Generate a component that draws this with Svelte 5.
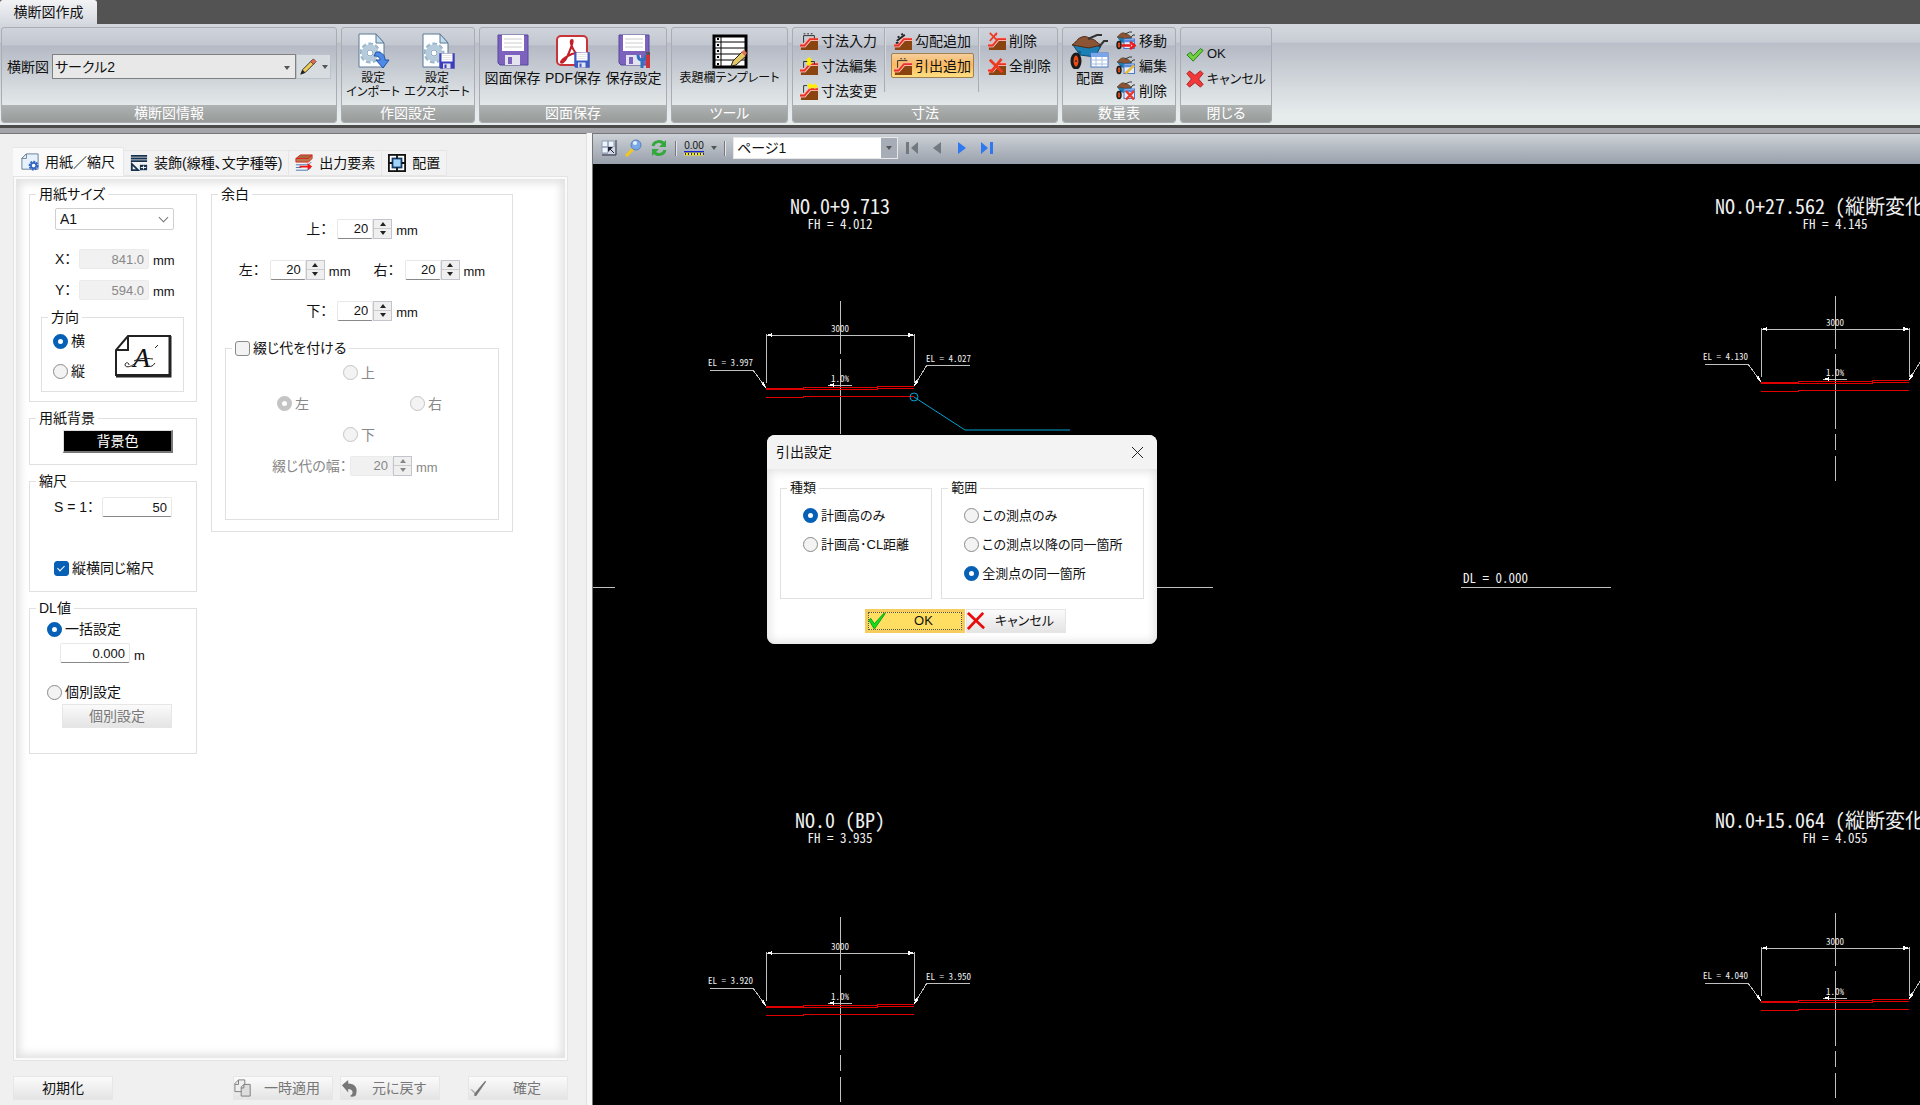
<svelte:head>
	<title>横断図作成</title>
</svelte:head>

<script>
	let section = 'サークル2';
	let page = 'ページ1';
	let paper = 'A1';
	let paperX = '841.0';
	let paperY = '594.0';
	let direction = 'yoko';
	let scale = '50';
	let sameScale = true;
	let dlMode = 'all';
	let dlValue = '0.000';
	let margins = { top: 20, left: 20, right: 20, bottom: 20 };
	let binding = false;
	let bindingSide = 'left';
	let bindingWidth = 20;
	let kind = 'height';
	let range = 'all';
	let dialogOpen = true;

	const tabs = [
		{ icon: 'paper', label: '用紙／縮尺' },
		{ icon: 'deco', label: '装飾(線種、文字種等)' },
		{ icon: 'output', label: '出力要素' },
		{ icon: 'layout', label: '配置' }
	];
	let activeTab = 0;

	// cx: centre line, dim: height of the dimension line
	const sections = [
		{ cx: 247, title: 'NO.0+9.713', fh: '4.012', titleY: 50, top: 137, dim: 171, left: '3.997', right: '4.027' },
		{ cx: 1242, title: 'NO.0+27.562 (縦断変化点)', fh: '4.145', titleY: 50, top: 132, dim: 165, left: '4.130', right: '4.160' },
		{ cx: 247, title: 'NO.0 (BP)', fh: '3.935', titleY: 664, top: 753, dim: 789, left: '3.920', right: '3.950' },
		{ cx: 1242, title: 'NO.0+15.064 (縦断変化点)', fh: '4.055', titleY: 664, top: 749, dim: 784, left: '4.040', right: '4.070' }
	];

	function step(side, diff) {
		margins[side] = Number(margins[side]) + diff;
	}
</script>

{#snippet floppy(color)}
	<path d="M1 1h30v30H3l-2-2z" fill={color} stroke="#54489a" />
	<rect x="5" y="1" width="22" height="16" fill="#fff" />
	<path d="M7 5h18M7 9h18M7 13h18" stroke="#ccc" />
	<rect x="8" y="21" width="15" height="10" fill="#e4e4ee" />
	<rect x="11" y="23" width="4" height="7" fill={color} />
{/snippet}

{#snippet gearPage()}
	<path d="M4 1h17l8 9v24H4z" fill="#fdfeff" stroke="#5a7894" />
	<path d="M21 1v9h8z" fill="#c5dced" stroke="#5a7894" />
	<circle cx="15" cy="20" r="8" fill="none" stroke="#9db8cc" stroke-width="5" stroke-dasharray="4 2" />
	<circle cx="15" cy="20" r="6" fill="#e9f1f7" stroke="#b5cbdc" stroke-width="5" />
	<circle cx="15" cy="20" r="3" fill="#fff" stroke="#8aa6bc" />
{/snippet}

{#snippet slope()}
	<path d="M1 17h5l6-7h8v10H1z" fill="#8a4410" />
	<path d="M0 15h5l6-7h9" fill="none" stroke="#ffb3a8" stroke-width="4" />
	<path d="M0 15h5l6-7h9" fill="none" stroke="#e83228" stroke-width="2" />
{/snippet}

{#snippet barrow()}
	<path d="M3 12l7 10 15 2 6-11" fill="#1b7fb4" stroke="#0b4a70" />
	<path d="M2 12c4-2 5-7 10-8 5-2 7 2 10 2 4 1 5 4 9 6l-12 3z" fill="#8a5435" stroke="#4d2a17" />
	<path d="M18 6L27 2l5 0M29 14l5-6h4" fill="none" stroke="#333" stroke-width="2" />
	<path d="M10 18L6 28" stroke="#0b5d8f" stroke-width="3" />
	<ellipse cx="6" cy="28" rx="4" ry="7" fill="#ef4a16" stroke="#1c1c1c" stroke-width="3" />
	<circle cx="6" cy="28" r="1" fill="#333" />
{/snippet}

{#snippet icon(name)}
	{#if name === 'import' || name === 'export'}
		<svg class="big" viewBox="0 0 36 36">
			{@render gearPage()}
			{#if name === 'import'}
				<path d="M21 19c6 0 9 3 9 8h4l-6 8-7-8h4c0-3-2-4-6-4z" fill="#4e8ae6" stroke="#2253a8" />
			{:else}
				<g transform="translate(20 20) scale(.5)">{@render floppy('#3a3fc0')}</g>
			{/if}
		</svg>
	{:else if name === 'save'}
		<svg class="big" viewBox="0 0 36 36"><g transform="translate(2 1)">{@render floppy('#7d62bd')}</g></svg>
	{:else if name === 'pdf'}
		<svg class="big" viewBox="0 0 36 36">
			<rect x="2" y="3" width="30" height="29" rx="4" fill="#fff" stroke="#c9343a" stroke-width="2" />
			<path d="M17 7c-3 0 0 8 3 12s8 5 8 3-6-3-11-1-11 6-11 8 4 0 7-7 6-15 4-15z" fill="none" stroke="#c41f28" stroke-width="2" />
			<g transform="translate(19 19) scale(.5)">{@render floppy('#3a5cc8')}</g>
		</svg>
	{:else if name === 'saveset'}
		<svg class="big" viewBox="0 0 36 36">
			<g transform="translate(2 1)">{@render floppy('#7d62bd')}</g>
			<path d="M22 22c0 4 2 5 4 5s4-1 4-5M26 27v8" fill="none" stroke="#2e6fc0" stroke-width="3" />
			<path d="M29 19h5v3h-3z" fill="#555" />
			<path d="M32 22v13" stroke="#c8343a" stroke-width="4" />
		</svg>
	{:else if name === 'template'}
		<svg class="big" viewBox="0 0 36 36">
			<rect x="2" y="3" width="32" height="31" fill="#fff" stroke="#000" stroke-width="3" />
			<path d="M2 9h32M2 15h32M2 21h32M2 27h32M9 3v31" stroke="#000" />
			<path d="M5 6h2M5 12h2M5 18h2M5 24h2M5 31h2" stroke="#000" stroke-width="2" />
			<path d="M19 33l2-5 9-9 4 4-10 9z" fill="#e6c766" stroke="#222" />
			<path d="M29 19l3-2 3 3-2 3z" fill="#d9705a" />
		</svg>
	{:else if name === 'barrow'}
		<svg class="barrow" viewBox="0 0 40 36">
			{@render barrow()}
			<rect x="21" y="20" width="17" height="14" fill="#fff" stroke="#4b78c8" />
			<rect x="21" y="20" width="17" height="4" fill="#7aa5ea" />
			<path d="M21 27h17M21 31h17M26 24v10M32 24v10" stroke="#a9bfdf" />
		</svg>
	{:else if name.startsWith('barrow-')}
		<svg class="mid" viewBox="0 0 40 40">
			{@render barrow()}
			<rect x="16" y="16" width="21" height="19" fill="#e6eefc" stroke="#4b78c8" stroke-width="2" />
			<path d="M16 20h21" stroke="#5a8be0" stroke-width="5" />
			{#if name === 'barrow-move'}
				<path d="M11 29h19M28 22l9 7-9 7" fill="none" stroke="#e81c1c" stroke-width="5" />
			{:else if name === 'barrow-edit'}
				<path d="M19 35l17-16" stroke="#e6b93b" stroke-width="5" />
			{:else}
				<path d="M20 20l16 17M36 20L20 37" stroke="#e83a2c" stroke-width="5" />
			{/if}
		</svg>
	{:else if name.startsWith('dim')}
		<svg class="small" viewBox="0 0 20 20">
			{@render slope()}
			{#if name === 'dim-in'}
				<path d="M4 12V4h12v3M4 2h2M8 2h2M12 2h2" fill="none" stroke="#222" />
			{:else if name === 'dim-edit'}
				<path d="M4 12V5h12v3" fill="none" stroke="#222" />
				<path d="M10 0l4 4h-2v3h2l-4 3-4-3h2V4H6z" fill="#ffee00" />
			{:else if name === 'dim-change'}
				<path d="M4 12V4h4" fill="none" stroke="#222" />
				<path d="M8 4l3-3 2 2h3V1l4 4-4 3V6h-3l-2 2z" fill="#ffee00" />
			{:else if name === 'dim-slope'}
				<path d="M3 10L12 3M4 5l2 1M8 3l2-1M2 12h3" fill="none" stroke="#222" stroke-width="2" />
			{:else if name === 'dim-lead'}
				<path d="M4 12V4h11M7 2h2M11 2h2" fill="none" stroke="#222" />
			{:else if name === 'dim-del'}
				<path d="M2 1l8 8M10 1L2 10M7 3h3" stroke="#ef3a22" stroke-width="2" />
			{:else}
				<path d="M2 3l14 14M15 2L3 17" stroke="#ef3a22" stroke-width="3" />
			{/if}
		</svg>
	{:else if name === 'ok'}
		<svg class="small" viewBox="0 0 20 20"><path d="M1 11l4-3 3 4 8-8 3 2-11 12z" fill="#6fd03a" stroke="#227a18" /></svg>
	{:else if name === 'cancel'}
		<svg class="small" viewBox="0 0 20 20"><path d="M1 4l3-3 6 5 6-5 3 3-5 6 5 6-3 3-6-5-6 5-3-3 5-6z" fill="#f23838" stroke="#a81818" /></svg>
	{:else if name === 'pencil'}
		<svg class="small" viewBox="0 0 20 20">
			<path d="M2 18l2-5L14 3l3 3L7 16z" fill="#f0cf58" stroke="#222" />
			<path d="M2 18l2-5 3 3z" fill="#222" />
			<path d="M13 4l3-3 3 3-3 3z" fill="#d9705a" stroke="#7a3c30" />
		</svg>
	{:else if name === 'paper'}
		<svg class="small" viewBox="0 0 20 20">
			<path d="M6 1h13v17H1V6z" fill="#e6f1fb" stroke="#61788f" />
			<path d="M6 1v5H1z" fill="#fff" stroke="#61788f" />
			<circle cx="14" cy="14" r="4" fill="#fff" stroke="#3467c6" stroke-width="3" stroke-dasharray="2 1" />
			<circle cx="14" cy="14" r="3" fill="none" stroke="#3467c6" stroke-width="2" />
		</svg>
	{:else if name === 'deco'}
		<svg class="small" viewBox="0 0 20 20">
			<path d="M1 2h18M1 5h18M1 8h18" stroke="#17324e" stroke-width="2" />
			<path d="M2 11v7h7z" fill="none" stroke="#17324e" stroke-width="2" />
			<rect x="11" y="12" width="8" height="6" fill="#17324e" />
			<path d="M12 15h6M15 13v4" stroke="#fff" />
		</svg>
	{:else if name === 'output'}
		<svg class="small" viewBox="0 0 20 20">
			<path d="M6 1h13l-4 4H1z" fill="#a8673f" stroke="#d8251c" />
			<path d="M1 5h14l4-4v4l-4 4H1z" fill="#b87850" stroke="#d8251c" />
			<path d="M1 12h14l3-3M1 15h6M1 18h13l4-3" fill="none" stroke="#3c6fb0" />
			<path d="M5 13h9v-3l5 4-5 4v-3H5z" fill="#f31414" />
		</svg>
	{:else if name === 'layout'}
		<svg class="small" viewBox="0 0 20 20">
			<rect x="1" y="1" width="18" height="18" fill="#fff" stroke="#111" stroke-width="2" />
			<rect x="5" y="5" width="10" height="10" fill="#9fd3fa" stroke="#123b66" stroke-width="2" />
			<path d="M10 1v4M10 15v4M1 10h4M15 10h4" stroke="#111" stroke-width="2" />
		</svg>
	{:else if name === 'apply'}
		<svg class="small" viewBox="0 0 20 20">
			<path d="M5 1h7v13H1V5zM5 1v5H1" fill="#eee" stroke="#777" />
			<path d="M11 6h7v13H8V9zM11 6v4H8" fill="#ddd" stroke="#777" />
		</svg>
	{:else if name === 'undo'}
		<svg class="small" viewBox="0 0 20 20"><path d="M1 7l7-6v4c7 0 12 5 8 14-3 1-5 1-6 0 5-3 3-8-2-8v4z" fill="#777" /></svg>
	{:else if name === 'commit'}
		<svg class="small" viewBox="0 0 20 20">
			<path d="M6 16L18 2l1 1L8 19H6z" fill="#777" />
			<path d="M1 11l2 2 3 3 1-1-3-3z" fill="#aaa" />
		</svg>
	{:else if name === 'check'}
		<svg class="small" viewBox="0 0 20 20"><path d="M1 9l2-2 4 6L18 1l1 1L7 19z" fill="#10e020" stroke="#0a9a14" /></svg>
	{:else if name === 'cross'}
		<svg class="small" viewBox="0 0 20 20"><path d="M1 1l18 17M18 1L1 19" stroke="#e80c0c" stroke-width="3" /></svg>
	{/if}
{/snippet}

{#snippet big(name, lines, kana)}
	<button class="big-btn" class:kana>
		{@render icon(name)}
		{#each lines as line}<span>{line}</span>{/each}
	</button>
{/snippet}

{#snippet small(name, label, on)}
	<button class="small-btn" class:on>{@render icon(name)}<span>{label}</span></button>
{/snippet}

{#snippet spin(id, label, side)}
	<div class="field">
		<label for={id}>{label}：</label>
		<span class="spin">
			<input {id} type="text" bind:value={margins[side]} />
			<span class="arrows">
				<button aria-label="増やす" on:click={() => step(side, 1)}></button>
				<button class="down" aria-label="減らす" on:click={() => step(side, -1)}></button>
			</span>
		</span>
		<span class="unit">mm</span>
	</div>
{/snippet}

<div class="app">
	<header>
		<div class="title"><button class="title-tab">横断図作成</button></div>
		<div class="ribbon">
			<section class="group">
				<div class="items">
					<label for="section">横断図</label>
					<span class="combo section-combo">
						<select id="section" bind:value={section}><option>サークル2</option></select>
					</span>
					<button class="pencil" aria-label="編集">{@render icon('pencil')}<i class="caret"></i></button>
				</div>
				<h2>横断図情報</h2>
			</section>
			<section class="group">
				<div class="items wide">
					{@render big('import', ['設定', 'インポート'], true)}
					{@render big('export', ['設定', 'エクスポート'], true)}
				</div>
				<h2>作図設定</h2>
			</section>
			<section class="group">
				<div class="items wide">
					{@render big('save', ['図面保存'])}
					{@render big('pdf', ['PDF保存'])}
					{@render big('saveset', ['保存設定'])}
				</div>
				<h2>図面保存</h2>
			</section>
			<section class="group">
				<div class="items wide">{@render big('template', ['表題欄テンプレート'], true)}</div>
				<h2>ツール</h2>
			</section>
			<section class="group">
				<div class="items cols">
					<div class="col">
						{@render small('dim-in', '寸法入力')}
						{@render small('dim-edit', '寸法編集')}
						{@render small('dim-change', '寸法変更')}
					</div>
					<div class="col">
						{@render small('dim-slope', '勾配追加')}
						{@render small('dim-lead', '引出追加', true)}
					</div>
					<div class="col">
						{@render small('dim-del', '削除')}
						{@render small('dim-delall', '全削除')}
					</div>
				</div>
				<h2>寸法</h2>
			</section>
			<section class="group">
				<div class="items cols">
					{@render big('barrow', ['配置'])}
					<div class="col">
						{@render small('barrow-move', '移動')}
						{@render small('barrow-edit', '編集')}
						{@render small('barrow-del', '削除')}
					</div>
				</div>
				<h2>数量表</h2>
			</section>
			<section class="group">
				<div class="items close">
					{@render small('ok', 'OK')}
					{@render small('cancel', 'キャンセル')}
				</div>
				<h2>閉じる</h2>
			</section>
		</div>
	</header>

	<main>
		<aside>
			<nav>
				{#each tabs as tab, i}
					<button class="tab" class:active={activeTab === i} on:click={() => (activeTab = i)}>
						{@render icon(tab.icon)}<span>{tab.label}</span>
					</button>
				{/each}
			</nav>
			<div class="sheet">
				<div class="left-col">
					<fieldset class="size">
						<legend>用紙サイズ</legend>
						<span class="combo paper-combo">
							<select aria-label="用紙サイズ" bind:value={paper}><option>A1</option><option>A2</option><option>A3</option></select>
						</span>
						<div class="xy">
							<label for="px">X：</label><input id="px" type="text" bind:value={paperX} disabled /><span class="unit">mm</span>
						</div>
						<div class="xy">
							<label for="py">Y：</label><input id="py" type="text" bind:value={paperY} disabled /><span class="unit">mm</span>
						</div>
						<fieldset class="direction">
							<legend>方向</legend>
							<div>
								<label class="opt"><input type="radio" bind:group={direction} value="yoko" />横</label>
								<label class="opt"><input type="radio" bind:group={direction} value="tate" />縦</label>
							</div>
							<svg width="58" height="44" viewBox="0 0 58 44">
								<path d="M14 2h42v39H2V16z" fill="#fff" stroke="#222" stroke-width="2" />
								<path d="M2 42h54V2" fill="none" stroke="#222" stroke-width="3" />
								<path d="M14 2v14H2" fill="none" stroke="#222" stroke-width="2" />
								<text x="19" y="33" class="script">A</text>
								<path d="M24 26c-4 6-12 9-13 5 0-3 4-3 4 0M20 27c6-3 12-3 19-2M41 14l3-3M35 32c2 1 4 0 6-3" fill="none" stroke="#222" />
							</svg>
						</fieldset>
					</fieldset>
					<fieldset class="bg">
						<legend>用紙背景</legend>
						<button class="black">背景色</button>
					</fieldset>
					<fieldset class="scale">
						<legend>縮尺</legend>
						<div class="xy">
							<label for="scale">S = 1：</label><input id="scale" type="text" bind:value={scale} />
						</div>
						<label class="opt"><input type="checkbox" bind:checked={sameScale} />縦横同じ縮尺</label>
					</fieldset>
					<fieldset class="dl">
						<legend>DL値</legend>
						<label class="opt"><input type="radio" bind:group={dlMode} value="all" />一括設定</label>
						<div class="dl-value"><input type="text" aria-label="DL値" bind:value={dlValue} /><span class="unit">m</span></div>
						<label class="opt"><input type="radio" bind:group={dlMode} value="each" />個別設定</label>
						<button class="plain" disabled={dlMode === 'all'}>個別設定</button>
					</fieldset>
				</div>

				<fieldset class="margins">
					<legend>余白</legend>
					<div class="mrow">{@render spin('mt', '上', 'top')}</div>
					<div class="mrow">{@render spin('ml', '左', 'left')}{@render spin('mr', '右', 'right')}</div>
					<div class="mrow">{@render spin('mb', '下', 'bottom')}</div>
					<fieldset class="binding">
						<legend><label class="opt"><input type="checkbox" bind:checked={binding} />綴じ代を付ける</label></legend>
						<div class="sides">
							<label class="opt top"><input type="radio" bind:group={bindingSide} value="top" disabled={!binding} />上</label>
							<label class="opt left"><input type="radio" bind:group={bindingSide} value="left" disabled={!binding} />左</label>
							<label class="opt right"><input type="radio" bind:group={bindingSide} value="right" disabled={!binding} />右</label>
							<label class="opt bottom"><input type="radio" bind:group={bindingSide} value="bottom" disabled={!binding} />下</label>
						</div>
						<div class="field bind-width">
							<label for="bw">綴じ代の幅：</label>
							<span class="spin">
								<input id="bw" type="text" bind:value={bindingWidth} disabled={!binding} />
								<span class="arrows">
									<button aria-label="増やす" disabled={!binding}></button>
									<button class="down" aria-label="減らす" disabled={!binding}></button>
								</span>
							</span>
							<span class="unit">mm</span>
						</div>
					</fieldset>
				</fieldset>
			</div>
			<footer>
				<button class="plain reset">初期化</button>
				<button class="plain" disabled>{@render icon('apply')}<span>一時適用</span></button>
				<button class="plain" disabled>{@render icon('undo')}<span>元に戻す</span></button>
				<button class="plain commit" disabled>{@render icon('commit')}<span>確定</span></button>
			</footer>
		</aside>

		<div class="view">
			<div class="toolbar">
				<button aria-label="全体表示">
					<svg width="18" height="18" viewBox="0 0 18 18">
						<path d="M2 2h6v6H2zM8 2h6v6H8zM2 8h6v6H2z" fill="#eef4fb" stroke="#8a9bb0" />
						<path d="M8 8h7v7H8z" fill="#cfd8e4" />
						<path d="M16 1v15H2" fill="none" stroke="#334" />
						<path d="M14 14l-4-4" stroke="#223" />
						<path d="M8 8h5l-5 5z" fill="#223" />
					</svg>
				</button>
				<button aria-label="拡大">
					<svg width="18" height="18" viewBox="0 0 18 18">
						<path d="M1 17l7-7" stroke="#f2c81c" stroke-width="3" />
						<circle cx="11" cy="6" r="5" fill="#79a9e6" stroke="#5c7fb5" />
						<circle cx="10" cy="4" r="2" fill="#e5f1ff" />
					</svg>
				</button>
				<button aria-label="再表示">
					<svg width="18" height="18" viewBox="0 0 18 18">
						<path d="M3 7c1-5 8-6 11-2M15 11c-1 5-8 6-11 2" fill="none" stroke="#35a83c" stroke-width="3" />
						<path d="M16 1v7h-7zM2 17v-7h7z" fill="#35a83c" />
					</svg>
				</button>
				<i class="sep"></i>
				<button class="digits" aria-label="寸法表示">
					<span>0.00</span>
					<svg width="20" height="5" viewBox="0 0 20 5"><path d="M0 1h20" stroke="#1620d8" stroke-width="2" /><path d="M0 3h20" stroke="#f4ea10" stroke-width="3" /><path d="M1 3h19" stroke="#1620d8" stroke-width="2" stroke-dasharray="1 2" /></svg>
				</button>
				<i class="caret"></i>
				<i class="sep"></i>
				<span class="combo page-combo">
					<select aria-label="ページ" bind:value={page}><option>ページ1</option></select>
				</span>
				<button class="nav" aria-label="最初" disabled><svg width="14" height="14" viewBox="0 0 14 14"><path d="M1 1h3v12H1zM13 1v12L6 7z" fill="#747980" /></svg></button>
				<button class="nav" aria-label="前へ" disabled><svg width="14" height="14" viewBox="0 0 14 14"><path d="M11 1v12L3 7z" fill="#747980" /></svg></button>
				<button class="nav" aria-label="次へ"><svg width="14" height="14" viewBox="0 0 14 14"><path d="M3 1v12l8-6z" fill="#2f78f0" /></svg></button>
				<button class="nav" aria-label="最後"><svg width="14" height="14" viewBox="0 0 14 14"><path d="M1 1v12l7-6zM10 1h3v12h-3z" fill="#2f78f0" /></svg></button>
			</div>

			<div class="canvas">
				<svg class="drawing">
					{#each sections as s}
						<g transform="translate({s.cx} 0)">
							<text class="name" y={s.titleY}>{s.title}</text>
							<text class="fh" y={s.titleY + 15}>FH = {s.fh}</text>
							<path class="axis" d="M0 {s.top}v53m0 5v75m0 5v16m0 6v25" />
							<g transform="translate(0 {s.dim})">
								<path class="line" d="M-74 -1v49M74 -1v49M-74 0H74M-130 35h43l13 18M130 30H87L74 51M-12 50h24" />
								<path class="tip" d="M-74 0l6-2v4zM74 0l-6-2v4zM-74 53l-5-4 3-2zM74 51l2-6 2 2zM-12 50l6-2v4z" />
								<path class="red" d="M-74 53h37v-1h74v-1h37M-74 54h37h74v-1h37M-74 62h37v-1h111" />
								<text class="dim" y="-3">3000</text>
								<text class="dim" y="47">1.0%</text>
								<text class="el" x="-132" y="31">EL = {s.left}</text>
								<text class="el" x="86" y="27">EL = {s.right}</text>
							</g>
						</g>
					{/each}
					<path class="line" d="M0 423h22M470 423h150M868 423h150" />
					<text class="fh dl-text" x="870" y="419">DL = 0.000</text>
					<g class="leader">
						<circle cx="321" cy="233" r="4" />
						<path d="M321 233l51 33h105" />
					</g>
				</svg>

				{#if dialogOpen}
					<div class="dialog" role="dialog" aria-label="引出設定">
						<div class="dialog-title">
							<span>引出設定</span>
							<button aria-label="閉じる" on:click={() => (dialogOpen = false)}>
								<svg width="13" height="13" viewBox="0 0 13 13"><path d="M1 1l11 11M12 1L1 12" stroke="#222" /></svg>
							</button>
						</div>
						<div class="dialog-body">
							<div class="dialog-sets">
								<fieldset>
									<legend>種類</legend>
									<label class="opt"><input type="radio" bind:group={kind} value="height" />計画高のみ</label>
									<label class="opt"><input type="radio" bind:group={kind} value="cl" />計画高･CL距離</label>
								</fieldset>
								<fieldset>
									<legend>範囲</legend>
									<label class="opt"><input type="radio" bind:group={range} value="this" />この測点のみ</label>
									<label class="opt"><input type="radio" bind:group={range} value="after" />この測点以降の同一箇所</label>
									<label class="opt"><input type="radio" bind:group={range} value="all" />全測点の同一箇所</label>
								</fieldset>
							</div>
							<div class="dialog-btns">
								<button class="plain ok" on:click={() => (dialogOpen = false)}>{@render icon('check')}<span>OK</span></button>
								<button class="plain" on:click={() => (dialogOpen = false)}>{@render icon('cross')}<span>キャンセル</span></button>
							</div>
						</div>
					</div>
				{/if}
			</div>
		</div>
	</main>
</div>

<style>
:global(body) {
	margin: 0;
	background: #f0f0f0;
}

.app {
	height: 100vh;
	display: flex;
	flex-direction: column;
	overflow: hidden;
	font-family: "Liberation Sans", "Noto Sans CJK JP", sans-serif;
	font-size: 14px;
	line-height: 18px;
	font-feature-settings: "palt";
	color: #111;
	white-space: nowrap;
}

.app *, .app *::after {
	box-sizing: border-box;
}

button, input, select {
	font: inherit;
	font-feature-settings: inherit;
	color: inherit;
	margin: 0;
	padding: 0;
	border: 0;
	background: none;
	border-radius: 0;
}

svg {
	display: block;
	flex: none;
}

svg.big {
	width: 36px;
	height: 36px;
}

svg.barrow {
	width: 40px;
	height: 36px;
}

svg.small {
	width: 18px;
	height: 18px;
}

svg.mid {
	width: 20px;
	height: 20px;
}

/* ribbon */
.title {
	height: 24px;
	background: #535353;
}

.title-tab {
	width: 97px;
	height: 24px;
	border-radius: 3px 3px 0 0;
	background: linear-gradient(#f2f3f5, #d5d9e0);
}

.ribbon {
	display: grid;
	grid-template-columns: 336px 134px 188px 117px 266px 114px 92px;
	gap: 4px;
	padding: 3px 1px 2px;
	background: linear-gradient(#d4d8de, #c8ccd4 18%, #b9bec8 19%, #e6ecec 90%);
	border-bottom: 3px solid #4b4b4b;
}

.group {
	height: 96px;
	display: flex;
	flex-direction: column;
	border: 1px solid #a9adb3;
	border-radius: 3px;
	overflow: hidden;
	background: linear-gradient(#cfd3db, #c3c7d0 18%, #b4b9c5 19%, #e3e9e9 82%);
}

.group h2 {
	margin: 0;
	height: 17px;
	font-size: 14px;
	line-height: 16px;
	font-weight: 400;
	text-align: center;
	color: #fff;
	background: linear-gradient(#b0b3b3, #969a98);
}

.items {
	flex: 1;
	display: flex;
	align-items: center;
	padding: 0 5px;
}

.items.wide {
	justify-content: space-evenly;
	align-items: flex-start;
	padding: 0;
}

.items.cols {
	align-items: flex-start;
	padding: 0 4px;
}

.items.close {
	flex-direction: column;
	align-items: flex-start;
	justify-content: center;
	padding: 0 2px;
	font-size: 13px;
}

.items > label {
	width: 45px;
}

.combo {
	position: relative;
	display: flex;
}

.combo select {
	width: 100%;
	appearance: none;
	padding-left: 2px;
}

.combo::after, .caret {
	content: "";
	border: 3px solid transparent;
	border-top: 4px solid #555;
	border-bottom: 0;
}

.combo::after {
	position: absolute;
	right: 5px;
	top: 11px;
	pointer-events: none;
}

.section-combo {
	flex: 1;
	height: 25px;
	background: #e8e8e8;
	border: 1px solid #808080;
}

.pencil {
	width: 35px;
	height: 25px;
	display: flex;
	align-items: center;
	justify-content: space-around;
	border: 1px solid #b9c3c8;
	background: #d7dce0;
}

.big-btn {
	display: flex;
	flex-direction: column;
	align-items: center;
	line-height: 14px;
	padding-top: 5px;
}

.big-btn.kana {
	font-size: 12px;
}

.cols .big-btn {
	padding-left: 3px;
}

.big-btn svg {
	margin-bottom: 2px;
}

.col {
	padding-right: 5px;
}

.col + .col {
	padding-left: 5px;
	border-left: 1px solid #d5d8dc;
	box-shadow: -1px 0 #a8adb3;
	min-height: 64px;
}

.big-btn + .col {
	padding: 0 0 0 3px;
}

.small-btn {
	height: 25px;
	display: flex;
	align-items: center;
	gap: 3px;
	padding: 0 2px;
	border: 1px solid transparent;
}

.small-btn.on {
	border-color: #a08050;
	border-radius: 2px;
	background: linear-gradient(#f5cf9c, #f9b862 45%, #ffdf80);
}

/* settings */
main {
	flex: 1;
	min-height: 0;
	display: grid;
	grid-template-columns: 587px 1fr;
	gap: 5px;
	border-top: 5px solid #a4a5ab;
	background: #f8f8f8;
}

aside {
	display: flex;
	flex-direction: column;
	min-height: 0;
	padding: 13px 18px 5px 13px;
	background: #f0f0f0;
	border-top: 1px solid #777;
	border-right: 1px solid #e2e2e2;
}

nav {
	display: flex;
	align-items: flex-end;
}

.tab {
	height: 26px;
	display: flex;
	align-items: center;
	gap: 6px;
	padding: 0 6px;
	border: 1px solid #e6e6e6;
	border-left: 0;
	background: #f2f2f2;
}

.tab.active {
	height: 29px;
	padding: 0 8px;
	border-bottom-color: #fafafa;
	background: #fafafa;
}

.sheet {
	flex: 1;
	min-height: 0;
	display: flex;
	align-items: flex-start;
	gap: 14px;
	padding: 6px 13px;
	border: 3px solid #fafafa;
	outline: 1px solid #e4e4e4;
	outline-offset: -1px;
	background: #fff;
	box-shadow: inset 0 0 9px 4px #e2e2e2;
}

fieldset {
	min-width: 0;
	margin: 0;
	padding: 0;
	border: 1px solid #e0e0e0;
}

legend {
	margin-left: 6px;
	padding: 0 3px;
}

.left-col {
	width: 168px;
	display: flex;
	flex-direction: column;
	gap: 7px;
}

.size {
	height: 217px;
	padding: 5px 12px 0 11px;
}

.size > legend {
	margin-left: -5px;
}

.paper-combo {
	width: 119px;
	height: 22px;
	margin: 0 0 19px 14px;
	border: 1px solid #cfcfcf;
	border-radius: 2px;
}

.paper-combo select {
	padding-left: 4px;
}

.paper-combo::after {
	width: 7px;
	height: 7px;
	right: 6px;
	top: 5px;
	border: solid #777;
	border-width: 0 1px 1px 0;
	transform: rotate(45deg);
}

.xy {
	display: flex;
	height: 20px;
	align-items: center;
	margin: 0 0 11px 14px;
}

.xy label {
	width: 24px;
}

input[type="text"] {
	width: 70px;
	height: 20px;
	padding: 0 4px;
	text-align: right;
	border: 1px solid #e8e8e8;
	border-bottom-color: #888;
	border-radius: 2px;
	background: #fff;
	font-size: 13px;
}

input[type="text"]:disabled {
	border-color: #ebebeb;
	background: #f1f1f1;
	color: #888;
}

.unit {
	margin-left: 4px;
	padding-top: 4px;
	font-size: 13px;
}

.direction {
	display: flex;
	justify-content: space-between;
	height: 84px;
	margin-top: -3px;
	padding: 0 11px;
}

.direction > legend {
	margin-left: -5px;
}

.direction svg {
	margin-top: 8px;
}

.script {
	font: italic 28px "Liberation Serif", serif;
	fill: #111;
}

.opt {
	display: flex;
	align-items: center;
	gap: 3px;
	height: 30px;
}

input[type="radio"], input[type="checkbox"] {
	appearance: none;
	flex: none;
	width: 15px;
	height: 15px;
	border: 1px solid #8a8a8a;
	border-radius: 50%;
	background: #f3f3f3;
}

input[type="radio"]:checked {
	border: 5px solid #0560b6;
	background: #fff;
}

input[type="radio"]:disabled {
	border-color: #c4c4c4;
}

.opt:has(input:disabled) {
	color: #888;
}

input[type="checkbox"] {
	border-radius: 3px;
}

input[type="checkbox"]:checked {
	position: relative;
	border-color: #0560b6;
	background: #0560b6;
}

input[type="checkbox"]:checked::after {
	content: "";
	position: absolute;
	left: 4px;
	top: 2px;
	width: 4px;
	height: 7px;
	border: solid #fff;
	border-width: 0 1px 1px 0;
	transform: rotate(45deg);
}

.bg {
	height: 56px;
}

.bg .black {
	display: block;
	width: 110px;
	height: 23px;
	margin: 3px 0 0 33px;
	border: 1px solid #ddd;
	border-right: 2px solid #777;
	border-bottom: 2px solid #777;
	background: #000;
	color: #fff;
}

.scale {
	height: 120px;
	padding: 7px 24px 0;
}

.scale .xy {
	margin: 0 0 36px;
}

.scale .xy label {
	width: 48px;
}

.dl {
	height: 155px;
	padding: 0 17px;
}

.dl > legend {
	margin-left: -11px;
}

.scale > legend {
	margin-left: -18px;
}

.dl .opt {
	height: 24px;
}

.dl-value {
	display: flex;
	margin: 2px 0 15px 13px;
}

.plain {
	width: 100px;
	height: 24px;
	display: flex;
	align-items: center;
	justify-content: center;
	border: 1px solid #e6e6e6;
	background: linear-gradient(#fbfbfb, #e4e4e4);
}

.plain:disabled {
	color: #777;
}

.plain span {
	flex: 1;
	text-align: center;
}

.dl .plain {
	width: 110px;
	margin-left: 15px;
}

.margins {
	width: 302px;
	height: 347px;
	padding: 5px 13px 0;
}

.margins > legend {
	margin-left: -7px;
}

.mrow {
	height: 41px;
	display: flex;
	justify-content: center;
	gap: 23px;
}

.field {
	display: flex;
	align-items: center;
}

.field label {
	width: 31px;
}

.spin {
	display: flex;
}

.spin input[type="text"] {
	width: 36px;
}

.arrows {
	width: 19px;
	display: flex;
	flex-direction: column;
	background: #efefef;
	border: 1px solid #c4c4cc;
}

.arrows button {
	flex: 1;
	display: flex;
	align-items: center;
	justify-content: center;
}

.arrows button + button {
	border-top: 1px solid #ccc;
}

.arrows button::after {
	content: "";
	border: 3px solid transparent;
	border-top: 0;
	border-bottom: 4px solid #222;
}

.arrows .down::after {
	transform: rotate(180deg);
}

.arrows button:disabled::after {
	border-bottom-color: #888;
}

.binding {
	height: 181px;
	margin-top: 8px;
}

.binding legend .opt {
	height: 18px;
}

.sides {
	display: grid;
	grid-template-columns: 66px 67px 67px;
	padding-left: 51px;
}

.sides .opt {
	height: 31px;
}

.sides .top {
	grid-area: 1 / 2;
}

.sides .left {
	grid-area: 2 / 1;
}

.sides .right {
	grid-area: 2 / 3;
}

.sides .bottom {
	grid-area: 3 / 2;
}

.bind-width {
	height: 31px;
	padding-left: 46px;
	color: #888;
}

.field.bind-width label {
	width: 78px;
}

.bind-width .spin input[type="text"] {
	width: 43px;
}

footer {
	display: flex;
	gap: 7px;
	padding-top: 15px;
}

.reset {
	margin-right: auto;
}

.commit {
	margin-left: 21px;
}

/* drawing view */
.view {
	display: flex;
	flex-direction: column;
	min-width: 0;
	border-left: 1px solid #777;
	border-top: 1px solid #777;
}

.toolbar {
	height: 30px;
	display: flex;
	align-items: center;
	gap: 7px;
	padding: 0 7px 2px;
	background: linear-gradient(#cdd1d7, #98a0ab);
}

.sep {
	width: 2px;
	height: 15px;
	border-left: 1px solid #777;
	border-right: 1px solid #e3e5e8;
}

.digits {
	width: 20px;
	font-size: 10px;
	line-height: 11px;
}

.page-combo {
	width: 165px;
	height: 22px;
	background: #fff;
	border: 1px solid #e8e8e8;
}

.page-combo select {
	padding-left: 3px;
	background: linear-gradient(#a6adb6, #a6adb6) right / 16px 100% no-repeat;
}

.page-combo::after {
	top: 8px;
}

.nav {
	width: 18px;
}

.canvas {
	flex: 1;
	position: relative;
	min-height: 0;
	overflow: hidden;
	background: #000;
}

.drawing {
	width: 100%;
	height: 100%;
	shape-rendering: crispEdges;
	font-family: "Noto Sans CJK JP", sans-serif;
	font-feature-settings: "hwid";
	fill: #f0f0f0;
}

.drawing text {
	text-anchor: middle;
}

.drawing .name {
	font-size: 20px;
}

.drawing .fh {
	font-size: 13px;
}

.drawing .dim, .drawing .el {
	font-size: 9px;
}

.drawing .el, .drawing .dl-text {
	text-anchor: start;
}

.axis, .line {
	fill: none;
	stroke: #c0c0c0;
}

.tip {
	fill: #fff;
}

.red {
	fill: none;
	stroke: #e00000;
}

.leader {
	fill: none;
	stroke: #00a2d4;
	shape-rendering: auto;
}

.dialog {
	position: absolute;
	left: 174px;
	top: 271px;
	width: 390px;
	border-radius: 8px;
	overflow: hidden;
	background: #fff;
	font-size: 13px;
}

.dialog-title {
	height: 34px;
	display: flex;
	align-items: center;
	justify-content: space-between;
	padding: 0 13px 0 9px;
	background: #f3f3f3;
	font-size: 14px;
}

.dialog-body {
	padding: 10px 13px;
	box-shadow: inset 0 0 9px 3px #e4e4e4;
}

.dialog-sets {
	display: grid;
	grid-template-columns: 3fr 4fr;
	gap: 9px;
}

.dialog-sets fieldset {
	height: 120px;
	padding: 4px 0 0 22px;
}

.dialog-sets legend {
	margin-left: -16px;
}

.dialog-sets .opt {
	height: 29px;
}

.dialog-btns {
	display: flex;
	justify-content: center;
	gap: 1px;
	padding: 10px 0 1px 6px;
}

.plain.ok {
	border: 3px solid #f6cc5c;
	background: #ffde62;
	outline: 1px dotted #555;
	outline-offset: -4px;
}
</style>
